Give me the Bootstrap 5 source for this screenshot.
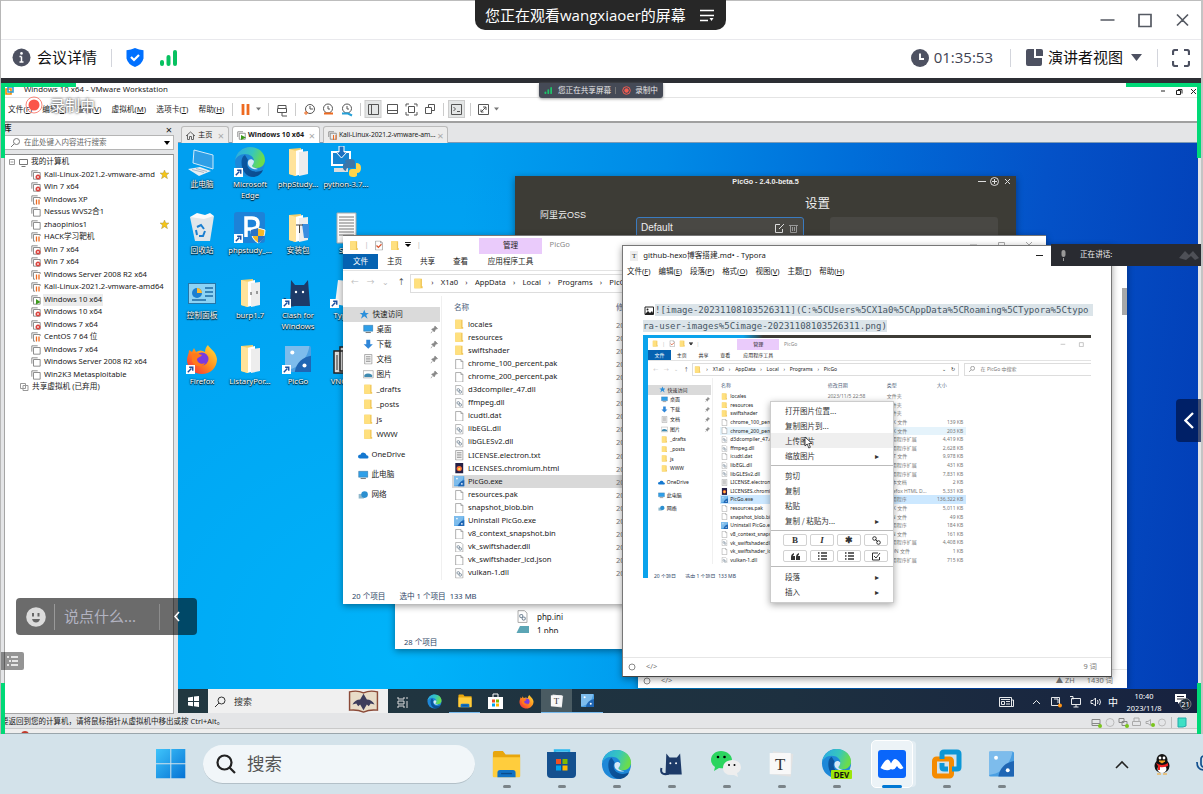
<!DOCTYPE html>
<html lang="zh-CN">
<head>
<meta charset="utf-8">
<title>会议详情</title>
<link href="https://cdn.jsdelivr.net/npm/bootstrap@5.3.0/dist/css/bootstrap.min.css" rel="stylesheet">
<script src="https://cdn.jsdelivr.net/npm/bootstrap@5.3.0/dist/js/bootstrap.bundle.min.js"></script>
<style>
body{width:1203px;height:794px;overflow:hidden;background:#fff;font-family:"Noto Sans","Noto Sans CJK SC",sans-serif;font-size:8px;line-height:1;color:#1a1a1a;white-space:nowrap}
svg{display:block;flex:none}
u{text-underline-offset:1px}
.title-bar{height:40px;border-top:1px solid #bdbdbd;border-bottom:1px solid #e9e9ed;padding-right:13px;color:#565a63}
.meet-bar{height:38px;padding:0 13px 3px 12px;font-size:15px;color:#111;font-family:"Open Sans","Noto Sans CJK SC",sans-serif}
.vline{width:1px;height:18px;background:#d3d5dc}
.strip{height:5px;background:#2c2e34}
.watch-pill{left:475px;top:0;width:251px;height:30px;background:#272727;color:#fff;border-radius:0 0 10px 10px;font:15px/22px "Open Sans","Noto Sans CJK SC",sans-serif;padding:0 12px 0 10px;z-index:9}
.shared{height:651px;background:#e4e5e7}
.outer-edge{left:0;top:0;width:1px;height:734px;background:#b7b7b7;z-index:8}
.outer-edge.end{left:auto;right:0;width:2px;background:#c4c4c4}
.vm-title{height:15px;padding-left:24px;background:#fff;border-bottom:1px solid #e4e4e4;font-size:7.9px;color:#222}
.vm-menu{height:25px;background:#fff;border-bottom:2px solid #a0a0a0;font-size:7.7px;padding-left:8px}
.vm-menu .menus{width:224px;gap:10.2px}
.vm-body{height:591px}
.lib{width:177px;padding-left:4px}
.lib-head{height:12px;font-size:7.5px;padding:0 5px 0 0}
.lib-search{height:15px;width:170px;background:#fff;border:1px solid #b5b5b5;font-size:7.5px;color:#666;padding:0 3px 0 6px}
.lib-tree{margin-top:4px;width:170px;height:560px;background:#fff;border:1px solid #a5a5a5;border-top-color:#8a8a8a;padding-top:1px}
.tree-row{height:12.5px;font-size:7.65px;padding-left:26px;gap:2px}
.tree-row.root{padding-left:4px}
.tree-row.shared-root{padding-left:15px}
.tree-row .lbl{padding:2px 1px;width:auto}
.tree-row.on .lbl{background:#ececec}
.tabs{height:20px;padding:3px 0 0 3px;font-size:7.2px;gap:3px;border-bottom:1px solid #7d9ab5}
.vtab{height:17px;background:#ececec;border:1px solid #bbb;border-bottom:0;border-radius:3px 3px 0 0;padding:0 4px;gap:3px}
.vtab.on{background:#fff;font-weight:700}
.vtab i{font-style:normal;color:#aaa;font-size:11px;font-weight:400;margin-left:auto}
.desk{width:1020px;height:570px;overflow:hidden;background:
 radial-gradient(ellipse 560px 500px at 22% 90%,rgba(0,190,255,.65),rgba(0,180,255,0) 100%),
 linear-gradient(97deg,#009ff0 0%,#009ff0 27%,#008ae6 45%,#006ed9 62%,#0452c8 80%,#023db6 100%)}
.icons{display:grid;grid-template-columns:repeat(4,48px);grid-template-rows:repeat(4,65.7px);padding-top:3px}
.icons>div{display:flex;flex-direction:column;align-items:center;color:#fff;font-size:7.7px;line-height:11px;text-align:center;text-shadow:0 1px 1px #000,0 0 2px #000;gap:1px}
.win{position:absolute;background:#fff;box-shadow:0 2px 7px rgba(0,0,0,.4);overflow:hidden}
.w-picgo{left:337px;top:33px;width:501px;height:300px;background:#3d3c36;color:#eee;font-family:"Liberation Sans","Noto Sans CJK SC",sans-serif}
.w-php{left:217px;top:440px;width:400px;height:66px}
.w-exp{left:165px;top:92px;width:703px;height:369px;font-size:10px;border-top:1px solid #777}
.w-back{left:460px;top:104px;width:489px;height:441px}
.w-typ{left:444px;top:102px;width:490px;height:432px;border:1px solid #777;border-bottom-color:#444}
/* file manager: every length is in em, so it also works as a reduced picture */
.fm{background:#fff;color:#222;line-height:1;font-family:"Noto Sans","Noto Sans CJK SC",sans-serif}
.fm-title{height:1.8em}
.fm-title .qa{width:13.6em;padding-left:.6em;gap:.55em}
.fm-mgr{width:6.3em;height:1.65em;background:#eacbfb;margin-top:.15em}
.fm-tabs{height:1.65em;border-bottom:1px solid #e3e3e3}
.fm-tabs>div{display:flex;align-items:center;justify-content:center;height:1.5em;width:3.3em}
.fm-tabs>.file{background:#0562b1;color:#fff;width:3.5em}
.fm t{font-size:.76em;display:inline-block;line-height:1.3}
.fm-nav{height:2.55em}
.fm-nav .arr{width:6.7em;padding:0 .5em 0 .8em;color:#bbb;justify-content:space-between}
.fm-addr{height:1.9em;border:1px solid #ddd;flex:0 0 40.6em;padding-left:.2em;gap:.72em}
.fm-find{height:1.9em;border:1px solid #ddd;margin-left:.8em;flex:1;padding-left:.6em;gap:.8em;color:#777}
.fm-side{width:9.9em;padding-top:1.1em;border-right:1px solid #f0f0f0}
.fm-side>div{height:1.5em;display:flex;align-items:center;padding:0 .2em 0 2em;gap:.3em}
.fm-side>.qk{background:#dadada;padding-left:1.6em;margin-right:.1em}
.fm-side>.top{height:2em;padding-left:1.5em}
.fm-side .pin{margin-left:auto}
.fm-side svg,.fm-row svg{width:1.05em;height:1.05em}
.fm-head{height:2.2em;color:#4c607a;padding-left:1.2em}
.fm-row{height:1.31em;margin-left:1em;padding-left:.2em;width:37.4em}
.fm-c1,.fm-c2,.fm-c3,.fm-c4{flex:none}
.fm-c1{width:16.2em;gap:.35em;padding-right:.5em}
.fm-row .fm-c2,.fm-row .fm-c3,.fm-row .fm-c4{color:#777}
.fm-c2{width:9em}.fm-c3{width:7.6em}.fm-c4{width:4em;text-align:right}
.fm-row.on{background:#d9d9d9}
.fm-foot{position:absolute;left:.9em;bottom:0;height:1.4em;gap:1.4em;color:#2d4566}
.mini{left:5px;top:3px;width:70.3em;height:243px;font-size:6.58px}
.mini .fm-row.on{background:#cce8ff}
.mini .fm-row.hov{background:#e5f3fb}
.shot{width:448px;height:243px;overflow:hidden;background:linear-gradient(90deg,#0aa3ec 0 100px,#3d3c36 120px);margin-top:1px}
.mono-md{font:9px/15.6px "DejaVu Sans Mono",monospace;color:#485766;padding:24px 19px 0 20px}
.mono-md .hl{background:#dbe4e9;padding:1px 5px 1px 0}
.typ-title{height:19px;padding-left:7px;font-size:7.7px;gap:5px}
.typ-menu{height:14px;padding-left:4px;gap:8px;font-size:7.5px}
.typ-foot{position:absolute;left:0;right:0;bottom:0;height:19px;border-top:1px solid #e6e6e6;color:#777;font-size:7.4px;padding:0 14px 0 5px}
.ctx{position:absolute;left:147px;top:155px;width:124px;height:202px;background:#fff;border:1px solid #ccc;box-shadow:0 2px 7px rgba(0,0,0,.35);font:7.5px "Noto Sans CJK SC",sans-serif;color:#333;padding-top:1px}
.ctx .ci{height:15px;padding:0 14px;display:flex;align-items:center;justify-content:space-between}
.ctx .ci.on{background:#efefef}
.ctx hr{margin:2px 0;border-color:#aaa;opacity:.8}
.ctx .btns{display:grid;grid-template-columns:repeat(4,1fr);gap:4px 3px;padding:1px 5px 0 12px}
.ctx .btns span{height:12px;border:1px solid #d2d2d2;border-radius:2px;display:flex;align-items:center;justify-content:center;font:bold 9px "Liberation Serif",serif}
.vm-task{position:absolute;left:0;top:546px;width:1020px;height:25px;background:linear-gradient(90deg,#223840,#1d3040 60%,#172240);color:#fff}
.vm-task .cell{width:30.7px;height:25px;display:flex;align-items:center;justify-content:center}
.vm-task .cell.run{border-bottom:2px solid #76b9ed}
.vm-task .cell.on{background:#4a5b62}
.vm-find{width:180px;background:#f0f0f0;color:#333;font-size:9px;height:25px;padding:0 9px 0 7px}
.vm-clock{font-size:7.4px;line-height:12px;text-align:center;width:42px}
.vm-status{height:15px;font-size:7.5px;padding:1px 16px 0 1px;border-bottom:1px solid #c9c9c9}
.vm-last{height:5px;background:#eee;border-bottom:1px solid #9aa5ab;overflow:hidden}
.gc{position:absolute;z-index:7;border:0 solid #00d977}
.ov{position:absolute;z-index:7}
.chat{left:16px;top:515px;width:181px;height:37px;border-radius:4px;background:rgba(0,0,0,.58);color:#b2b3c1;font-size:15px;padding:0 17px 0 10px}
.host{height:60px;background:#d3e2ea}
.host .find{width:272px;height:39px;border-radius:20px;background:#f1f6f9;border-bottom:1px solid #b3c0c8;font-size:17.5px;color:#555;padding-left:13px;gap:11px}
.host .app{width:55px;height:60px;position:relative;display:flex;justify-content:center;align-items:center}
.host .app:after{content:"";position:absolute;left:24px;top:50.5px;width:8px;height:3.5px;border-radius:2px;background:#7b8489}
.host .app.on:after{left:18px;width:20px;background:#0078d4}
.host .app.on .plate{width:42px;height:48px;border-radius:5px;background:#ecf3f7;border:1px solid #fff;box-shadow:4px 0 0 -1px #e3edf3}
</style>
</head>
<body>
<svg width="0" height="0" class="position-absolute">
<defs>
<linearGradient id="ge" x1="0" y1="0" x2="1" y2="1"><stop offset="0" stop-color="#0c59a4"/><stop offset="1" stop-color="#0a4a8c"/></linearGradient>
<linearGradient id="gf" x1="0" y1="0" x2="1" y2=".3"><stop offset="0" stop-color="#2aa8e8"/><stop offset=".6" stop-color="#36c6bd"/><stop offset="1" stop-color="#6bdc4c"/></linearGradient>
<linearGradient id="gw" x1="0" y1="0" x2="1" y2="1"><stop offset="0" stop-color="#3fc4fb"/><stop offset="1" stop-color="#0572d4"/></linearGradient>
<linearGradient id="gfx" x1="1" y1="0" x2="0" y2="1"><stop offset="0" stop-color="#ffe53b"/><stop offset=".5" stop-color="#ff8a1e"/><stop offset="1" stop-color="#f5203f"/></linearGradient>
</defs>
<symbol id="edge" viewBox="0 0 32 32"><circle cx="16" cy="16" r="15" fill="#1e88d8"/><path d="M1 15C2 6 9 1 16 1c9 0 15 6 15 13 0 5-4 8-8 8-3 0-5-1-5-2s2-2 2-5c0-4-4-7-9-7C6 8 2 11 1 15z" fill="url(#gf)"/><path d="M11 9C5 11 6 31 20 31c5-1 8-4 9-7-10 5-19-2-15-10z" fill="url(#ge)"/><path d="M20 15c-2-3-7-2-6 3 1 4 6 6 10 5-3-1-6-2-6-3s2-2 2-5z" fill="#eaf5fa" opacity=".9"/></symbol>
<symbol id="firefox" viewBox="0 0 32 32"><path d="M3 7l3 2 2-4 2 4c3-2 6-2 9 0 0-3 1-5 3-7 1 3 8 6 9 14 0 9-7 15-15 15S1 25 1 17c0-4 2-6 2-10z" fill="url(#gfx)"/><circle cx="16" cy="16" r="6.500" fill="#7a3be0"/><path d="M6 11c5-2 7 0 10 1-1 2-4 2-5 4 0 4 5 6 8 4-2 5-11 4-13-2z" fill="#ff7a1a"/></symbol>
<symbol id="folder" viewBox="0 0 16 16"><path d="M2 1h11v11h1v3H2z" fill="#f0c658"/><path d="M2 1h9v14H2z" fill="#ffe07e"/></symbol>
<symbol id="file" viewBox="0 0 16 16"><path d="M2.500.8h8l3 3v11.500h-11z" fill="#fff" stroke="#888"/><path d="M10.500.8v3h3" fill="none" stroke="#888"/></symbol>
<symbol id="dll" viewBox="0 0 16 16"><path d="M2.500.8h8l3 3v11.500h-11z" fill="#fff" stroke="#999"/><circle cx="6.500" cy="7.500" r="2" fill="none" stroke="#789" stroke-width="1.300"/><circle cx="9.500" cy="10.500" r="2" fill="none" stroke="#789" stroke-width="1.300"/></symbol>
<symbol id="txt" viewBox="0 0 16 16"><path d="M2.500.8h11v14.500h-11z" fill="#f8f8f8" stroke="#888"/><path d="M4.500 4h7M4.500 6.500h7M4.500 9h7M4.500 11.500h7" stroke="#777"/></symbol>
<symbol id="htm" viewBox="0 0 16 16"><path d="M2 0h12v16H2z" fill="#252046"/><circle cx="8" cy="8.500" r="4" fill="#ff7139"/><circle cx="8" cy="9" r="1.800" fill="#ffe14d"/></symbol>
<symbol id="picgo" viewBox="0 0 32 32"><rect width="32" height="32" rx="2" fill="#4a9fe2"/><path d="M0 0h30C28 14 18 28 0 30z" fill="#7dbcec"/><path d="M32 12v20H12C14 20 22 14 32 12z" fill="#1f66b4"/><circle cx="9" cy="8" r="2.500" fill="#fff"/><circle cx="24" cy="24" r="2.500" fill="#fff"/></symbol>
<symbol id="cat" viewBox="0 0 32 32"><path d="M9 3l4 5h9l4-5 2 26H8z" fill="#1d3a68"/><path d="M3 21c-2 8 4 8 9 7" fill="none" stroke="#1d3a68" stroke-width="2.500"/><circle cx="14" cy="15" r="1.200" fill="#fff"/><circle cx="21" cy="15" r="1.200" fill="#fff"/></symbol>
<symbol id="monitor" viewBox="0 0 16 16"><path d="M1 2h14v9H1z" fill="#2f9fe8" stroke="#3a6d96" stroke-width=".7"/><path d="M4 13h8" stroke="#777" stroke-width="1.500"/></symbol>
<symbol id="bigfolder" viewBox="0 0 32 32"><path d="M7 3l12-1v25l-6 3-6-2z" fill="#f3cf6a"/><path d="M13 5l8-2v25l-8 2z" fill="#fff"/><path d="M17 6l9-1v23l-9 2z" fill="#ededed"/><path d="M7 3l7 2v25l-7-2z" fill="#ffe39a"/></symbol>
<symbol id="sc" viewBox="0 0 10 10"><path d="M0 0h10v10H0z" fill="#fff"/><path d="M2 8L6 4M3.500 2.500H7.500V6.500" fill="none" stroke="#1b4fa0" stroke-width="1.600"/></symbol>
<symbol id="vmi" viewBox="0 0 12 12"><path d="M1 8V1h7M3 3h8v8H3z" fill="none" stroke="#777"/></symbol>
<symbol id="tyi" viewBox="0 0 32 32"><path d="M6 1l24 3-3 27-24-3z" fill="#e2e2e2"/><path d="M2 3h25v25H2z" fill="#f8f8f8"/><text x="14.500" y="23" font-size="20" text-anchor="middle" font-family="Liberation Serif" fill="#333">T</text></symbol>
<symbol id="bars" viewBox="0 0 18 16"><rect x="0" y="10" width="4" height="6" rx="2"/><rect x="6.500" y="5" width="4" height="11" rx="2"/><rect x="13" y="0" width="4" height="16" rx="2"/></symbol>
<symbol id="exf" viewBox="0 0 32 32"><path d="M1 3q0-2 2-2h9l3 4h16v24H1z" fill="#e8a60c"/><path d="M1 8h30v21q0 1-1 1H2q-1 0-1-1z" fill="#ffcd3d"/><path d="M6 30v-5q0-3 3-3h14q3 0 3 3v5z" fill="#1272c4"/><path d="M10 26h12" stroke="#0a4c8c" stroke-width="1.500"/></symbol>
</svg>

<header class="title-bar d-flex align-items-center justify-content-end">
 <svg width="92" height="16" fill="none" stroke="#565a63" stroke-width="1.700"><path d="M2.500 8h14M41 2.500h12v12h-12zM79 2.500l11 11M90 2.500l-11 11"/></svg>
</header>
<div class="watch-pill position-absolute d-flex align-items-center justify-content-between">您正在观看wangxiaoer的屏幕<svg width="14" height="13" stroke="#fff" stroke-width="1.400"><path d="M0 1.500h14M0 6.500h14M0 11.500h8"/><path d="M9.500 9h4l-2 3z" fill="#fff" stroke="none"/></svg></div>
<div class="meet-bar d-flex align-items-center">
 <svg width="19" height="19"><circle cx="9.500" cy="9.500" r="9" fill="#4d5161"/><path d="M9.500 8.500V14M7.500 8.500h2M7.500 14h4" stroke="#fff" stroke-width="1.500"/><circle cx="9.500" cy="5.400" r="1.300" fill="#fff"/></svg>
 <span style="margin:0 14px 0 6px">会议详情</span><i class="vline" style="margin-right:14px"></i>
 <svg width="18" height="20"><path d="M9 0q4 2 8.500 2.300v8.200Q16 16.500 9 19 2 16.500.500 10.500V2.300Q5 2 9 0z" fill="#0070ff"/><path d="M5 9l3 3 5-5" fill="none" stroke="#fff" stroke-width="2.200"/></svg>
 <svg class="ms-3" width="18" height="16" fill="#07c160"><use href="#bars"/></svg>
 <svg class="ms-auto" width="18" height="18"><circle cx="9" cy="9" r="9" fill="#4d5161"/><path d="M9 4.500v5.500h4" stroke="#fff" stroke-width="1.900" fill="none"/></svg>
 <span style="color:#3f4352;padding:0 5px">01:35:53</span>
 <i class="vline flex-shrink-0" style="margin:0 15px 0 12px"></i>
 <svg width="17" height="17" fill="#4d5161"><path d="M2 0h6v9h8v6q0 2-2 2H2q-2 0-2-2V2Q0 0 2 0zM10 0h5q2 0 2 2v5h-7z"/></svg>
 <span style="margin-left:5px">演讲者视图</span>
 <svg class="ms-2" width="11" height="7"><path d="M0 0h11L5.500 7z" fill="#4d5161"/></svg>
 <i class="vline" style="margin:0 14px 0 15px"></i>
 <svg width="18" height="18" fill="none" stroke="#4d5161" stroke-width="2.200"><path d="M1 6V3q0-2 2-2h3M12 1h3q2 0 2 2v3M17 12v3q0 2-2 2h-3M6 17H3q-2 0-2-2v-3"/></svg>
</div>
<div class="strip"></div>
<div class="outer-edge position-absolute"></div><div class="outer-edge end position-absolute"></div>

<main class="shared position-relative">
 <div class="vm-title d-flex align-items-center">Windows 10 x64 - VMware Workstation
  <svg class="ms-auto me-1 mt-1" width="40" height="8" fill="none" stroke="#222"><path d="M2 3h4M17.500 2.500h4v4h-4zM19 1.500h4v4M32 1l5 5M37 1l-5 5"/></svg></div>
 <div class="vm-menu d-flex align-items-center">
  <div class="menus d-flex"><span>文件(<u>F</u>)</span><span>编辑(<u>E</u>)</span><span>查看(<u>V</u>)</span><span>虚拟机(<u>M</u>)</span><span>选项卡(<u>T</u>)</span><span>帮助(<u>H</u>)</span></div>
  <svg width="272" height="23" fill="none" stroke="#555" stroke-width="1">
   <path d="M.500 5v13M36.500 5v13M63.500 5v13M128.500 5v13M211.500 5v13M238.500 5v13" stroke="#ccc"/>
   <path d="M11 6v11M16 6v11" stroke="#ee6a20" stroke-width="2.800"/><path d="M24 9.500h5l-2.500 3z" fill="#777" stroke="none"/>
   <path d="M46 7.500h8v3h-8zM45.500 10.500h9v4h-9zM50 14v4h5"/>
   <circle cx="78" cy="11" r="4.500"/><path d="M78 8v3h3"/><path d="M72 15h4M74 13v4" stroke="#ee6a20"/>
   <circle cx="96" cy="10.500" r="4.500"/><path d="M96 8v3h2"/><path d="M92 15.500h9" stroke="#ee6a20" stroke-width="2"/>
   <circle cx="115" cy="10.500" r="4.500"/><path d="M115 8v3h2"/><path d="M110 15.500h6l4 2" stroke="#25a0d8" stroke-width="2"/>
   <rect x="133" y="2.500" width="16" height="17" fill="#e4e6e6" stroke="#ccc"/><path d="M136.500 6.500h10v10h-10zM139.500 6.500v10M155.500 6.500h10v9h-10zM155.500 12.500h10"/>
   <path d="M174 8.500V6h3M182 6h3v2.500M185 14v3h-3M177 17h-3v-3M176.500 8.500h6v6h-6zM193.500 9.500h6v6h-6zM196.500 9V6.500h6v6H200"/>
   <rect x="216.500" y="2.500" width="16" height="17" fill="#e4e6e6" stroke="#ccc"/><path d="M219.500 6.500h10v10h-10zM221.500 9l2 2-2 2M225 13.500h3M246.500 6.500h10v10h-10zM249 14l5-5M251 9h3v3M249 11.500V14h2.500"/><path d="M262 9.500h5l-2.500 3z" fill="#777" stroke="none"/></svg>
 </div>
 <div class="vm-body d-flex">
  <aside class="lib flex-shrink-0">
   <div class="lib-head d-flex align-items-center justify-content-between"><b>库</b><span style="font-size:11px">×</span></div>
   <div class="lib-search d-flex align-items-center gap-1"><svg width="9" height="9" fill="none" stroke="#777"><circle cx="5.500" cy="3.500" r="3"/><path d="M3 6L0 9"/></svg>在此处键入内容进行搜索<svg class="ms-auto" width="6" height="4"><path d="M0 0h6L3 4z"/></svg></div>
   <div class="lib-tree" id="tree"></div>
  </aside>
  <section class="flex-grow-1" style="margin-left:1px">
   <div class="tabs d-flex">
    <div class="vtab d-flex align-items-center" style="width:48px"><svg width="9" height="9" fill="none" stroke="#666"><path d="M0 5l4.500-4L9 5M1.500 4v4.500h2V5.500h2v3h2V4"/></svg>主页<i>×</i></div>
    <div class="vtab on d-flex align-items-center" style="width:88px;font-size:7.100px;gap:2px"><svg width="9" height="9"><use href="#vmi"/><path d="M4 4l5 2.500L4 9z" fill="#3c9b1c"/></svg>Windows 10 x64<i>×</i></div>
    <div class="vtab d-flex align-items-center" style="width:125px;font-size:6.800px;gap:2px"><svg width="9" height="9"><use href="#vmi"/><path d="M5.500 4v5M8 4v5" stroke="#ee6a20"/></svg><span style="letter-spacing:-.12px">Kali-Linux-2021.2-vmware-am...</span><i>×</i></div>
   </div>
   <div class="desk position-relative">
    <div class="icons">
     <div><svg width="32" height="32" viewBox="0 0 32 32"><path d="M8 4l19 5v14L7 17z" fill="#2f9fe6" stroke="#cfeafa"/><path d="M2 23l12-2 11 4-12 5z" fill="#e6eef3"/><path d="M6 23.500l12 3M10 22.500l11 3" stroke="#9ab" stroke-width=".8"/></svg>此电脑</div>
     <div><svg width="32" height="32"><use href="#edge"/><use href="#sc" y="22" width="9" height="9"/></svg>Microsoft<br>Edge</div>
     <div><svg width="32" height="32"><use href="#bigfolder"/></svg>phpStudy...</div>
     <div><svg width="32" height="32" viewBox="0 0 32 32"><path d="M2 6h18v13H2z" fill="#1683d0" stroke="#fff" stroke-width="2"/><path d="M4 22h14v4H4z" fill="#ddd"/><path d="M9 0h5v6h3l-5.500 6L6 6h3z" fill="#1c6fc0" stroke="#fff"/><path d="M15 16q0-3 5-3t5 3v6h-7q-2 0-2 3-4-1-3-6 0-2 4-2z" fill="#3b75a8"/><path d="M26 17q5 0 5 5t-4 5v2q0 2-4 2t-4-3v-2q0-3 3-3h4z" fill="#ffd54a"/></svg>python-3.7...</div>
     <div><svg width="32" height="32" viewBox="0 0 32 32"><path d="M4 5l24-1-4 25H9z" fill="#dfe6ea"/><path d="M4 5l7-4 8 2 5-2 4 3-10 3z" fill="#fafafa"/><path d="M11 15l4-2 3 4M19 19l-2 5h-4M10 18l1 5" fill="none" stroke="#1b7fd0" stroke-width="2"/></svg>回收站</div>
     <div><svg width="32" height="32" viewBox="0 0 32 32"><rect width="31" height="31" rx="3" fill="#1d82d8"/><path d="M12 25V6h6q6 0 6 5.500T18 17h-6" fill="none" stroke="#fff" stroke-width="3.500"/><path d="M24 16l7 2q0 9-7 13-7-4-7-13z" fill="#f6b828" stroke="#fff"/><path d="M24 16v8h-7v-6zM24 24h7q-2 5-7 7z" fill="#2a72c8"/><use href="#sc" y="22" width="9" height="9"/></svg>phpstudy_...</div>
     <div><svg width="32" height="32"><use href="#bigfolder"/><path d="M20 12h7v14h-5z" fill="#3a8de0"/><path d="M14 13h7M17.500 13v8" stroke="#444"/></svg>安装包</div>
     <div><svg width="32" height="32"><path d="M7 1h19v30H7z" fill="#fafafa" stroke="#aaa"/><path d="M9 5h15M9 8h15M9 11h15M9 14h15M9 17h15M9 20h15M9 23h15" stroke="#777"/></svg>SSH</div>
     <div><svg width="32" height="32" viewBox="0 0 32 32"><rect x="2.500" y="6.500" width="27" height="20" fill="#8cd3f5" stroke="#2676a8"/><circle cx="11" cy="16" r="5" fill="#1b7fd0"/><path d="M11 16v-5a5 5 0 0 1 5 5z" fill="#ffb92e"/><path d="M19 11h8M19 15h8M19 19h8M6 23h14" stroke="#1c6ca5" stroke-width="1.500"/></svg>控制面板</div>
     <div><svg width="32" height="32"><use href="#bigfolder"/><path d="M17 15v3M23 14v3" stroke="#444"/></svg>burp1.7</div>
     <div><svg width="32" height="32"><use href="#cat"/><use href="#sc" y="22" width="9" height="9"/></svg>Clash for<br>Windows</div>
     <div><svg width="32" height="32"><path d="M8 3l20 2-3 26-20-4z" fill="#f5f5f5"/><use href="#sc" y="22" width="9" height="9"/></svg>Typora</div>
     <div><svg width="32" height="32"><use href="#firefox"/><use href="#sc" y="22" width="9" height="9"/></svg>Firefox</div>
     <div><svg width="32" height="32"><use href="#bigfolder"/></svg>ListaryPor...</div>
     <div><svg width="32" height="32"><use href="#picgo" x="3" y="3" width="26" height="26"/><use href="#sc" y="22" width="9" height="9"/></svg>PicGo</div>
     <div><svg width="32" height="32"><path d="M4 8h10v22H4zM10 4h12v24H10z" fill="#ddd" stroke="#222" stroke-width="1.500"/><path d="M13 9v18M16 9v18M19 9v18M7 12v15" stroke="#333"/></svg>VNC-Vi...</div>
    </div>

    <div class="win w-picgo">
     <div class="d-flex position-relative" style="height:12px;font-size:7.200px;font-weight:700"><span class="w-100 text-center" style="padding-top:2px">PicGo - 2.4.0-beta.5</span>
      <svg class="position-absolute end-0 me-1" width="36" height="12" fill="none" stroke="#ddd"><path d="M2 5.500h8M29 3l5 5M34 3l-5 5M16 5.500h5M18.500 3v5"/><circle cx="18.500" cy="5.500" r="4"/></svg></div>
     <div class="text-center" style="font-size:12.500px;padding:10px 0 0 104px">设置</div>
     <div class="d-flex" style="padding-left:25px"><span style="font-size:9px;width:96px">阿里云OSS</span>
      <div class="d-flex align-items-center justify-content-between px-1" style="width:168px;height:22px;margin-top:6px;border:1px solid #3a7bc0;border-radius:3px;background:#494844;font-size:10px">Default<svg width="24" height="10" fill="none" stroke="#ddd"><path d="M5 1.500H.500v8h7V6M4 6l5-5"/><path d="M14 2.500h9M15.500 3v6.500h6V3M17.500 4v4M19.500 4v4" stroke="#999"/></svg></div>
      <div style="width:168px;height:22px;margin:6px 0 0 26px;border-radius:3px;background:#494844"></div></div>
    </div>
    <div class="win w-php"><div class="d-flex align-items-center gap-2" style="margin:27px 0 0 121px"><svg width="13" height="13"><use href="#dll"/></svg><span>php.ini</span></div>
     <div class="d-flex align-items-start gap-2 overflow-hidden" style="margin:3px 0 0 121px;height:7px"><svg width="13" height="8"><path d="M4 0h9v8H0z" fill="#5ba5b5"/></svg><span style="margin-top:1px">1.php</span></div>
     <div style="color:#2d4566;padding:6px 0 0 9px;font-size:7.600px">28 个项目</div></div>
    <div class="win w-back"><div class="position-absolute" style="right:0;top:41px;width:5px;height:27px;background:#a8a8a8"></div>
     <div class="typ-foot d-flex align-items-center gap-2" style="padding-top:3px"><svg width="8" height="8" fill="none" stroke="#888"><circle cx="4" cy="4" r="3"/></svg>&nbsp;&lt;/&gt;<span class="ms-auto">▲ ZH</span><span class="ms-1">1430 词</span></div></div>
    <div class="win w-exp fm" data-fm></div>

    <div class="win w-typ">
     <div class="typ-title d-flex align-items-center"><span style="font:7px 'Liberation Serif',serif;background:#eee;padding:1px 2px">T</span>github-hexo博客搭建.md• - Typora<svg class="ms-auto" width="76" height="9"><path d="M1 4.500h7" stroke="#222"/></svg></div>
     <div class="typ-menu d-flex align-items-center"><span>文件(<u>F</u>)</span><span>编辑(<u>E</u>)</span><span>段落(<u>P</u>)</span><span>格式(<u>O</u>)</span><span>视图(<u>V</u>)</span><span>主题(<u>T</u>)</span><span>帮助(<u>H</u>)</span></div>
     <div class="mono-md"><svg class="d-inline-block align-middle" width="10" height="9" style="margin-left:1px;margin-right:1px"><path d="M1 1h8.500v7.500H1z" fill="none" stroke="#222"/><path d="M1 8l3-3 2 2 2-2 1.500 3z" fill="#222"/><circle cx="3.500" cy="3.500" r="1" fill="#222"/></svg><span class="hl">![image-20231108103526311](C:%5CUsers%5CX1a0%5CAppData%5CRoaming%5CTypora%5Ctypo</span><br><span class="hl" style="padding-right:0">ra-user-images%5Cimage-20231108103526311.png)</span>
      <div class="shot position-relative"><div class="fm mini position-absolute" data-fm></div></div></div>
     <div class="ctx">
      <div class="ci">打开图片位置...</div><div class="ci">复制图片到...</div><div class="ci on">上传图片</div><div class="ci">缩放图片<span>▸</span></div><hr>
      <div class="ci">剪切</div><div class="ci">复制</div><div class="ci">粘贴</div><div class="ci">复制 / 粘贴为...<span>▸</span></div><hr>
      <div class="btns"><span>B</span><span><em>I</em></span><span>✱</span><span><svg width="9" height="9" fill="none" stroke="#333"><circle cx="2.500" cy="2.500" r="1.800"/><circle cx="6.500" cy="6.500" r="1.800"/><path d="M3 3l3 3"/></svg></span><span><svg width="9" height="7" fill="#333"><path d="M0 4q0-3 3-4v1.500Q2 2 2 3h2v4H0zM5 4q0-3 3-4v1.500Q7 2 7 3h2v4H5z"/></svg></span><span><svg width="9" height="8" stroke="#333" stroke-width="1.500"><path d="M3 1h6M3 4h6M3 7h6M0 1h1.500M0 4h1.500M0 7h1.500"/></svg></span><span><svg width="9" height="8" stroke="#333" stroke-width="1.500"><path d="M3 1h6M3 4h6M3 7h6M0 1h1.500M0 4h1.500M0 7h1.500"/></svg></span><span><svg width="9" height="9" fill="none" stroke="#333"><path d="M7.500 5v3h-7V1H6M2 4l2 2 4-5"/></svg></span></div>
      <hr class="mt-1"><div class="ci">段落<span>▸</span></div><div class="ci">插入<span>▸</span></div>
      <svg class="position-absolute" style="left:33px;top:34px" width="10" height="13"><path d="M1 1v9l2.200-2 1.600 4 1.600-.7L4.800 7.500H8z" fill="#fff" stroke="#222" stroke-width=".8"/></svg>
     </div>
     <div class="typ-foot d-flex align-items-center gap-2"><svg width="8" height="8" fill="none" stroke="#888"><circle cx="4" cy="4" r="3"/></svg>&nbsp;&lt;/&gt;<span class="ms-auto">9 词</span></div>
    </div>

    <div class="vm-task d-flex align-items-center">
     <div class="cell" style="width:30px"><svg width="11" height="11" fill="#fff"><path d="M0 1.500l5-.7V5H0zM6 .6L11 0v5H6zM0 6h5v4.300l-5-.7zM6 6h5v5l-5-.7z"/></svg></div>
     <div class="vm-find d-flex align-items-center gap-2"><svg width="11" height="11" fill="none" stroke="#333"><circle cx="6.500" cy="4.500" r="3.500"/><path d="M4 7L0 11"/></svg>搜索
      <svg class="ms-auto" width="31" height="25" viewBox="0 0 31 26"><path d="M1 3q8-2 14.500 1Q22 1 30 3v19q-8-1-14.500 2Q9 21 1 22z" fill="#e8dcc8" stroke="#8b4a38" stroke-width="1.500"/><path d="M4 16q3-5 8-5l3.500-6 3.500 6q5 0 8 5l-4-1-2 3-2-2-3.500 6-3.500-6-2 2-2-3z" fill="#3d3d5c"/></svg></div>
     <div class="cell"><svg width="12" height="12" fill="none" stroke="#ddd"><path d="M1 1v2h6V1M1 5h6v3H1zM1 12v-2h6v2M10 1v2M10 5v7"/></svg></div>
     <div class="cell"><svg width="15" height="15"><use href="#edge"/></svg></div>
     <div class="cell run"><svg width="14" height="14"><use href="#exf"/></svg></div>
     <div class="cell"><svg width="15" height="17"><path d="M0 4h15v12H0z" fill="#fff"/><path d="M5 4V1h5v3" fill="none" stroke="#fff"/><path d="M4 6.500h3v3H4z" fill="#f25022"/><path d="M8 6.500h3v3H8z" fill="#7fba00"/><path d="M4 10.500h3v3H4z" fill="#00a4ef"/><path d="M8 10.500h3v3H8z" fill="#ffb900"/></svg></div>
     <div class="cell"><svg width="15" height="15"><use href="#firefox"/></svg></div>
     <div class="cell run on"><svg width="14" height="14"><use href="#tyi"/></svg></div>
     <div class="cell run"><svg width="13" height="13"><use href="#picgo"/></svg></div>
     <svg class="ms-auto" style="margin-right:2px" width="107" height="14" fill="none" stroke="#fff" stroke-width=".9"><path d="M.500 2.500h12v9H.500zM2 4.500h9M2.500 6.500h3v3h-3zM7 6.500h4M7 9h4M12.500 5h2v6.500h-2M34 9l3.500-3.500L41 9M52.500 2.500h8v8h-8zM55 4h4v4M72.500 3.500h9v6h-9zM77 10v2M74.500 12h5M71 1.500h3v3M92 5.500h2l2.500-2.500v8L94 8.500h-2zM98.500 5q1 2 0 4M100.500 4q2 3 0 6"/><circle cx="61" cy="10.500" r="2" fill="#ff9416" stroke="none"/></svg>
     <span style="font-size:10px">中</span>
     <div class="vm-clock" style="margin-left:5px">10:40<br>2023/11/8</div>
     <svg style="margin:0 6px 0 9px" width="18" height="17"><path d="M1 1h11v8H6l-2 2V9H1z" fill="#fff"/><path d="M3 3.500h7M3 6h7" stroke="#223"/><circle cx="11.500" cy="11" r="5.500" fill="#22303c" stroke="#999" stroke-width=".7"/><text x="11.500" y="14" font-size="7.500" text-anchor="middle" fill="#fff">21</text></svg>
    </div>
   </div>
  </section>
 </div>
 <div class="vm-status d-flex align-items-center justify-content-between">要返回到您的计算机，请将鼠标指针从虚拟机中移出或按 Ctrl+Alt。
  <svg width="96" height="12" fill="none" stroke="#888"><path d="M1 3.500h8v6H1zM1 7.500h8M28 2.500h5v4h-5zM31 5.500h5v4h-5z"/><path d="M41.500 5.500h8v4h-8zM43 5V2h5v3M55 5.500h2l2.500-2v6l-2.500-2h-2z" stroke="#aaa"/><circle cx="19" cy="6.500" r="4" stroke="#bbb"/><circle cx="71" cy="6.500" r="3.500" stroke="#bbb"/><path d="M80.500 1v11" stroke="#bbb"/><path d="M87 2h8v8l-3 1h-5z" fill="#3ee0c4" stroke="#2aa"/><g fill="#7ac51c" stroke="none"><circle cx="9" cy="10" r="2"/><circle cx="36" cy="10" r="2"/><circle cx="62" cy="9" r="2"/></g></svg></div>
 <div class="vm-last"><svg width="40" height="5"><circle cx="25" cy="6" r="4" fill="#c0392b"/></svg></div>

 <!-- marks laid over the shared screen -->
 <svg class="ov" style="left:5px;top:3px" width="9" height="9" fill="none" stroke-width="1.600"><path d="M1 3h5v5H1z" stroke="#f58b00"/><path d="M3 1h5v5H3z" stroke="#2a9fd8"/></svg>
 <div class="gc" style="left:1px;top:0;width:75px;height:75px;border-width:4px 0 0 4px;clip-path:polygon(0 0,100% 0,100% 4px,4px 4px,4px 100%,0 100%)"></div>
 <div class="gc" style="right:2px;top:0;width:75px;height:75px;border-width:4px 4px 0 0"></div>
 <div class="gc" style="left:1px;bottom:0;height:51px;border-width:0 0 0 4px"></div>
 <div class="gc" style="right:2px;bottom:0;height:51px;border-width:0 4px 0 0"></div>
 <div class="ov d-flex align-items-center" style="left:25px;top:13px;gap:7px;color:#fff;font-size:15px;text-shadow:0 0 3px #555,0 0 2px #888;height:18px"><svg width="18" height="18"><circle cx="9" cy="9" r="8" fill="none" stroke="#f9877d"/><circle cx="9" cy="9" r="5.500" fill="#fb5549"/></svg>录制中</div>
 <div class="ov d-flex align-items-center" style="left:539px;top:0;width:124px;height:15px;border-radius:0 0 3px 3px;background:#454a56;color:#e8e8e8;font-size:7.600px;padding:0 5px;box-shadow:0 1px 3px #999"><svg style="margin-right:5px" width="9" height="7" fill="#1fc26b"><use href="#bars"/></svg>您正在共享屏幕<span class="ms-1" style="width:1px;height:7px;background:#777"></span><svg style="margin:0 4px 0 6px" width="9" height="9"><circle cx="4.500" cy="4.500" r="3.800" fill="none" stroke="#f25b50"/><circle cx="4.500" cy="4.500" r="2.200" fill="#f25b50"/></svg>录制中</div>
 <div class="ov d-flex align-items-center" style="right:2px;top:161px;width:150px;height:22px;background:#292b31;color:#eee;font-size:7.600px;padding-left:9px;gap:13px"><svg width="7" height="11" fill="#999"><rect x="1.500" width="4" height="7" rx="2"/><path d="M3 8h1v3H3z"/></svg>正在讲话:<svg class="ms-auto me-0" width="22" height="12" fill="#4e5057"><path d="M0 9l6-7 4 4 4-4 6 7-4 2-4-4-5 4z"/></svg></div>
 <div class="ov chat d-flex align-items-center"><svg width="20" height="20"><circle cx="10" cy="10" r="9.800" fill="#dcdcdc"/><path d="M7 6v3.500M12.500 6v3.500" stroke="#666" stroke-width="2"/><path d="M6 12h8q-1 3.500-4 3.500T6 12z" fill="#666"/></svg><i class="ms-2" style="width:1px;height:26px;background:#999"></i><span style="margin-left:9px">说点什么...</span><i class="ms-auto" style="width:1px;height:26px;background:#8c8c8c"></i><svg style="margin-left:14px" width="6" height="11" fill="none" stroke="#fff" stroke-width="1.600"><path d="M5 1L1 5.500 5 10"/></svg></div>
 <div class="ov d-flex align-items-center justify-content-center" style="left:1px;top:569px;width:23px;height:18px;border-radius:0 2px 2px 0;background:rgba(0,0,0,.42)"><svg width="11" height="10" stroke="#fff" stroke-width="1.300"><path d="M0 1h2M4 1h7M2 5h2M5 5h6M0 9h2M4 9h7"/></svg></div>
 <div class="ov d-flex align-items-center justify-content-center" style="right:2px;top:316px;width:25px;height:43px;border-radius:4px 0 0 4px;background:rgba(0,20,70,.72)"><svg width="10" height="17" fill="none" stroke="#fff" stroke-width="2.300"><path d="M9 1L1.500 8.500 9 16"/></svg></div>
</main>

<footer class="host d-flex align-items-center">
 <svg style="margin-left:156px" width="30" height="30" fill="url(#gw)"><path d="M0 0h14.300v14.300H0zM15.300 0h14v14.300h-14zM0 15.300h14.300v14H0zM15.300 15.300h14v14h-14z"/></svg>
 <div class="find d-flex align-items-center" style="margin-left:17px;margin-right:4px"><svg width="20" height="20" fill="none" stroke="#222" stroke-width="2.200"><circle cx="8.500" cy="8.500" r="7"/><path d="M13.500 13.500L19 19"/></svg>搜索</div>
 <div class="app"><svg width="31" height="29"><use href="#exf"/></svg></div>
 <div class="app"><svg width="30" height="31"><path d="M8 5V1.500h14V5" fill="none" stroke="#2bb8ef" stroke-width="2.400"/><path d="M0 3h29v22q0 4-4 4H4q-4 0-4-4z" fill="#14508f"/><path d="M9 10h5v5H9z" fill="#f25022"/><path d="M15.500 10h5v5h-5z" fill="#7fba00"/><path d="M9 16.500h5v5H9z" fill="#00a4ef"/><path d="M15.500 16.500h5v5h-5z" fill="#ffb900"/></svg></div>
 <div class="app"><svg width="31" height="31"><use href="#edge"/></svg></div>
 <div class="app"><svg width="26" height="26"><use href="#cat"/></svg></div>
 <div class="app"><svg width="31" height="28"><path d="M10 1C4 1 0 5 0 10q0 4 4 7l-1 4 5-3q13 2 13-8C21 5 16 1 10 1z" fill="#2bd55f"/><circle cx="7" cy="7" r="1.300"/><circle cx="13.500" cy="7" r="1.300"/><path d="M21 10q-9 1-9 8 0 8 11 7l4 2-1-4q4-2 4-6 0-6-9-7z" fill="#eee"/><circle cx="18" cy="15" r="1"/><circle cx="23.500" cy="15" r="1"/></svg></div>
 <div class="app"><svg width="27" height="28"><use href="#tyi"/></svg></div>
 <div class="app"><svg width="31" height="32"><use href="#edge" width="31" height="31"/><rect x="10" y="22" width="21" height="9" rx="1" fill="#9be60b"/><text x="20.500" y="29.500" font-size="8" font-weight="700" text-anchor="middle" fill="#111">DEV</text></svg></div>
 <div class="app on"><div class="plate d-flex align-items-center justify-content-center"><svg width="28" height="28"><rect width="28" height="28" rx="3" fill="#0a66fb"/><path d="M2.500 18q4-8 7-8.500 2 0 3.500 4 2-4.500 4-4.500 3 0 8.500 9-4 3-6.500-2-3 5-6 3-4 3-10.500-1z" fill="#fff"/></svg></div></div>
 <div class="app"><svg width="30" height="31" fill="none" stroke-width="5"><rect x="2.500" y="10" width="17" height="17" rx="2" stroke="#f58b00"/><path d="M10 10V5q0-2 2-2h13q2 0 2 2v13q0 2-2 2h-5" stroke="#0d97d6"/><path d="M10 14v4q0 2 2 2h4" stroke="#0d97d6"/></svg></div>
 <div class="app"><svg width="25" height="26"><use href="#picgo"/></svg></div>
 <svg style="margin-left:86px" width="14" height="9" fill="none" stroke="#222" stroke-width="1.600"><path d="M1 8l6-6 6 6"/></svg>
 <svg style="margin-left:24px" width="18" height="21"><ellipse cx="9" cy="12" rx="7.500" ry="7" fill="#111"/><ellipse cx="9" cy="6" rx="5.500" ry="6" fill="#111"/><ellipse cx="9" cy="15" rx="4.500" ry="4" fill="#fff"/><circle cx="7" cy="4" r="1.400" fill="#fff"/><circle cx="11" cy="4" r="1.400" fill="#fff"/><path d="M6 7h6l-3 2zM4 20h4M10 20h4" fill="#f6a21c" stroke="#f6a21c"/><path d="M3 9q6 4 12 0v3q-6 2-8 1v3H5v-4z" fill="#e22"/></svg>
 <svg class="overflow-hidden" style="margin-left:25px;margin-right:-8px" width="15" height="20" fill="none" stroke="#12508f" stroke-width="1.700"><rect x="5" y="2" width="6" height="11" rx="3"/><path d="M1 8q0 8 7 8t7-8M8 16v4"/></svg>
</footer>

<script>
const use=(n)=>`<svg viewBox="0 0 16 16"><use href="#${n}"/></svg>`;
// virtual machine library
const vms=[['Kali-Linux-2021.2-vmware-amd','x',1],['Win 7 x64','x'],['Windows XP','p'],['Nessus WVS2合1',''],['zhaopinios1','',1],['HACK学习靶机','p'],['Win 7 x64','x'],['Win 7 x64','x'],['Windows Server 2008 R2 x64','p'],['Kali-Linux-2021.2-vmware-amd64','p'],['Windows 10 x64','r'],['Windows 10 x64','x'],['Windows 7 x64','x'],['CentOS 7 64 位','p'],['Windows 7 x64',''],['Windows Server 2008 R2 x64',''],['Win2K3 Metasploitable','']];
const mark={x:'<circle cx="7" cy="7" r="2.500" fill="#d9423c"/><path d="M5.800 5.800l2.400 2.400M8.200 5.800L5.800 8.200" stroke="#fff" stroke-width=".6"/>',p:'<path d="M4 4h6v6H4z" fill="#fff"/><path d="M5.500 4.500v5M8 4.500v5" stroke="#ee6a20" stroke-width="1.300"/>',r:'<path d="M5 4l4.500 3L5 9.500z" fill="#3c9b1c"/>','':''};
const row='tree-row d-flex align-items-center';
document.getElementById('tree').innerHTML=
 `<div class="${row} root"><svg width="7" height="7" fill="none" stroke="#999"><path d="M.500.500h5v5h-5zM1.500 3h3"/></svg><svg width="9" height="9" fill="none" stroke="#777" style="margin-left:1px"><path d="M.500 1.500h8v5h-8zM2.500 8.500h4"/></svg><span class="lbl">我的计算机</span></div>`+
 vms.map(v=>`<div class="${row} ${v[1]=='r'?'on':''}"><svg width="10" height="10"><use href="#vmi" width="10" height="10"/>${mark[v[1]]}</svg><span class="lbl">${v[0]}</span>${v[2]?'<svg class="ms-auto me-1" width="9" height="9"><path d="M4.500 0l1.300 3H9L6.500 5.200l1 3.500-3-2-3 2 1-3.500L0 3h3.200z" fill="#f5c518" stroke="#998a4a" stroke-width=".4"/></svg>':''}</div>`).join('')+
 `<div class="${row} shared-root"><svg width="9" height="9" fill="none" stroke="#999"><path d="M.500.500h5v5h-5zM3 2.500h5v5H3z"/></svg><span class="lbl">共享虚拟机 (已弃用)</span></div>`;
// file manager
const D='应用程序扩展',files=[['folder','locales','文件夹',''],['folder','resources','文件夹',''],['folder','swiftshader','文件夹',''],['file','chrome_100_percent.pak','PAK 文件','139'],['file','chrome_200_percent.pak','PAK 文件','203'],['dll','d3dcompiler_47.dll',D,'4,419'],['dll','ffmpeg.dll',D,'2,628'],['file','icudtl.dat','DAT 文件','9,978'],['dll','libEGL.dll',D,'431'],['dll','libGLESv2.dll',D,'7,831'],['txt','LICENSE.electron.txt','文本文档','2'],['htm','LICENSES.chromium.html','Firefox HTML D...','5,331'],['picgo','PicGo.exe','应用程序','136,322'],['file','resources.pak','PAK 文件','5,011'],['file','snapshot_blob.bin','BIN 文件','49'],['picgo','Uninstall PicGo.exe','应用程序','184'],['file','v8_context_snapshot.bin','BIN 文件','161'],['dll','vk_swiftshader.dll',D,'4,408'],['file','vk_swiftshader_icd.json','JSON 文件','1'],['dll','vulkan-1.dll',D,'715']];
const pin='<svg class="pin" viewBox="0 0 16 16"><path d="M9 3l4 4-3 1-2 4-4-4 4-2zM5 11l-2 3" fill="#888" stroke="#888"/></svg>';
const f=c=>`d-flex align-items-center ${c}`;
const fm=`
<div class="${f('fm-title')}"><div class="${f('qa')}"><svg style="width:1em;height:1.1em"><use href="#folder"/></svg><t style="color:#bbb">|</t><svg style="width:1em;height:1.1em" viewBox="0 0 16 16"><use href="#file"/><path d="M4 8l3 3 5-5" fill="none" stroke="#d9532c" stroke-width="2"/></svg><svg style="width:1em;height:1.1em"><use href="#folder"/></svg><svg style="width:.6em;height:.6em" viewBox="0 0 6 6"><path d="M0 .500h6" stroke="#222"/><path d="M0 2h6L3 5z"/></svg><t style="color:#bbb">|</t></div><div class="${f('fm-mgr justify-content-center')}"><t>管理</t></div><t style="margin-left:1em;color:#888">PicGo</t><svg style="width:8em;height:1em;margin-left:auto" viewBox="0 0 80 10" fill="none" stroke="#aaa"><path d="M4 5h7M32.500 2.500h6v6h-6zM60 2l6 6M66 2l-6 6"/></svg></div>
<div class="d-flex fm-tabs"><div class="file"><t>文件</t></div><div><t>主页</t></div><div><t>共享</t></div><div><t>查看</t></div><div style="width:6.7em"><t>应用程序工具</t></div></div>
<div class="${f('fm-nav')}"><div class="${f('arr')}"><t>←</t><t>→</t><t>⌄</t><t style="color:#333">↑</t></div><div class="${f('fm-addr')}"><svg style="width:1.1em;height:1.1em"><use href="#folder"/></svg>${['X1a0','AppData','Local','Programs','PicGo'].map(x=>`<t>›</t><t>${x}</t>`).join('')}<t style="margin-left:auto">⌄</t><t style="margin-right:.6em">↻</t></div><div class="${f('fm-find')}"><svg style="width:.9em;height:.9em" viewBox="0 0 9 9" fill="none" stroke="#777"><circle cx="5.500" cy="3.500" r="3"/><path d="M3 6L0 9"/></svg><t>在 PicGo 中搜索</t></div></div>
<div class="d-flex"><div class="fm-side"><div class="qk"><svg viewBox="0 0 16 16"><path d="M8 1l2 5h5l-4 3 2 6-5-4-5 4 2-6-4-3h5z" fill="#2b8fdb"/></svg><t>快速访问</t></div>
<div>${use('monitor')}<t>桌面</t>${pin}</div><div><svg viewBox="0 0 16 16"><path d="M5 1h6v7h4l-7 7-7-7h4z" fill="#2f86d8"/></svg><t>下载</t>${pin}</div><div>${use('txt')}<t>文档</t>${pin}</div><div><svg viewBox="0 0 16 16"><path d="M.500 2.500h15v11H.500z" fill="#fff" stroke="#999"/><path d="M2 9q5-4 12 0v3H2z" fill="#3f8ab0"/></svg><t>图片</t>${pin}</div>
${['_drafts','_posts','js','WWW'].map(x=>`<div>${use('folder')}<t>${x}</t></div>`).join('')}
<div class="top" style="margin-top:.3em"><svg viewBox="0 0 16 16"><path d="M3 13q-3 0-3-3t4-3q1-4 5-3 3 0 4 4 3 0 3 2.500T14 13z" fill="#1478d0"/></svg><t>OneDrive</t></div><div class="top">${use('monitor')}<t>此电脑</t></div><div class="top"><svg viewBox="0 0 16 16"><path d="M1 6h8v7H1z" fill="#8fb8cc"/><circle cx="10" cy="7" r="5" fill="#2b8fd0"/></svg><t>网络</t></div></div>
<div><div class="${f('fm-head')}"><div class="fm-c1"><t>名称</t></div><div class="fm-c2"><t>修改日期</t></div><div class="fm-c3"><t>类型</t></div><div><t>大小</t></div></div>
${files.map(r=>`<div class="${f('fm-row')} ${r[1]=='PicGo.exe'?'on':''} ${r[3]=='203'?'hov':''}"><div class="${f('fm-c1')}">${r[0]=='picgo'?'<svg viewBox="0 0 32 32"><use href="#picgo"/></svg>':use(r[0])}<t>${r[1]}</t></div><div class="fm-c2"><t>2023/11/5 22:58</t></div><div class="fm-c3"><t>${r[2]}</t></div><div class="fm-c4"><t>${r[3]?r[3]+' KB':''}</t></div></div>`).join('')}</div></div>
<div class="${f('fm-foot')}"><t>20 个项目</t><t>选中 1 个项目&nbsp;&nbsp;133 MB</t></div>`;
document.querySelectorAll('[data-fm]').forEach(e=>e.innerHTML=fm);
</script>
</body>
</html>
